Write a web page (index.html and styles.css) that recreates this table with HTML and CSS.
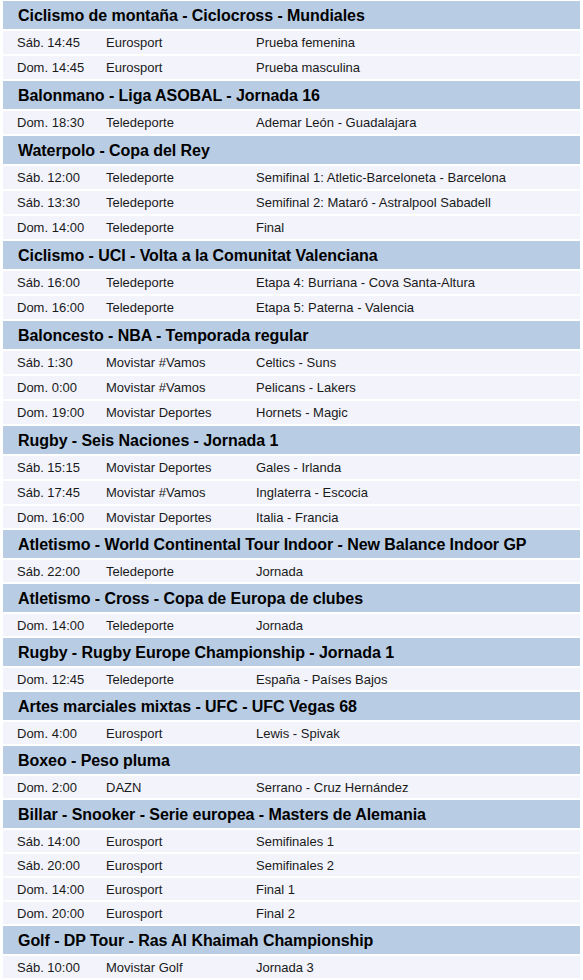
FILE: index.html
```html
<!DOCTYPE html>
<html lang="es">
<head>
<meta charset="utf-8">
<title>Programación</title>
<link rel="stylesheet" href="styles.css">
</head>
<body>
<div class="list">
  <div class="head">Ciclismo de montaña - Ciclocross - Mundiales</div>
  <div class="row tall"><span>Sáb. 14:45</span><span>Eurosport</span><span>Prueba femenina</span></div>
  <div class="row tall"><span>Dom. 14:45</span><span>Eurosport</span><span>Prueba masculina</span></div>
  <div class="head">Balonmano - Liga ASOBAL - Jornada 16</div>
  <div class="row tall"><span>Dom. 18:30</span><span>Teledeporte</span><span>Ademar León - Guadalajara</span></div>
  <div class="head">Waterpolo - Copa del Rey</div>
  <div class="row tall"><span>Sáb. 12:00</span><span>Teledeporte</span><span>Semifinal 1: Atletic-Barceloneta - Barcelona</span></div>
  <div class="row tall"><span>Sáb. 13:30</span><span>Teledeporte</span><span>Semifinal 2: Mataró - Astralpool Sabadell</span></div>
  <div class="row tall"><span>Dom. 14:00</span><span>Teledeporte</span><span>Final</span></div>
  <div class="head">Ciclismo - UCI - Volta a la Comunitat Valenciana</div>
  <div class="row tall"><span>Sáb. 16:00</span><span>Teledeporte</span><span>Etapa 4: Burriana - Cova Santa-Altura</span></div>
  <div class="row tall"><span>Dom. 16:00</span><span>Teledeporte</span><span>Etapa 5: Paterna - Valencia</span></div>
  <div class="head">Baloncesto - NBA - Temporada regular</div>
  <div class="row tall"><span>Sáb. 1:30</span><span>Movistar #Vamos</span><span>Celtics - Suns</span></div>
  <div class="row tall"><span>Dom. 0:00</span><span>Movistar #Vamos</span><span>Pelicans - Lakers</span></div>
  <div class="row tall"><span>Dom. 19:00</span><span>Movistar Deportes</span><span>Hornets - Magic</span></div>
  <div class="head">Rugby - Seis Naciones - Jornada 1</div>
  <div class="row tall"><span>Sáb. 15:15</span><span>Movistar Deportes</span><span>Gales - Irlanda</span></div>
  <div class="row tall"><span>Sáb. 17:45</span><span>Movistar #Vamos</span><span>Inglaterra - Escocia</span></div>
  <div class="row"><span>Dom. 16:00</span><span>Movistar Deportes</span><span>Italia - Francia</span></div>
  <div class="head">Atletismo - World Continental Tour Indoor - New Balance Indoor GP</div>
  <div class="row"><span>Sáb. 22:00</span><span>Teledeporte</span><span>Jornada</span></div>
  <div class="head">Atletismo - Cross - Copa de Europa de clubes</div>
  <div class="row"><span>Dom. 14:00</span><span>Teledeporte</span><span>Jornada</span></div>
  <div class="head">Rugby - Rugby Europe Championship - Jornada 1</div>
  <div class="row"><span>Dom. 12:45</span><span>Teledeporte</span><span>España - Países Bajos</span></div>
  <div class="head">Artes marciales mixtas - UFC - UFC Vegas 68</div>
  <div class="row"><span>Dom. 4:00</span><span>Eurosport</span><span>Lewis - Spivak</span></div>
  <div class="head">Boxeo - Peso pluma</div>
  <div class="row"><span>Dom. 2:00</span><span>DAZN</span><span>Serrano - Cruz Hernández</span></div>
  <div class="head">Billar - Snooker - Serie europea - Masters de Alemania</div>
  <div class="row"><span>Sáb. 14:00</span><span>Eurosport</span><span>Semifinales 1</span></div>
  <div class="row"><span>Sáb. 20:00</span><span>Eurosport</span><span>Semifinales 2</span></div>
  <div class="row"><span>Dom. 14:00</span><span>Eurosport</span><span>Final 1</span></div>
  <div class="row"><span>Dom. 20:00</span><span>Eurosport</span><span>Final 2</span></div>
  <div class="head">Golf - DP Tour - Ras Al Khaimah Championship</div>
  <div class="row"><span>Sáb. 10:00</span><span>Movistar Golf</span><span>Jornada 3</span></div>
</div>
</body>
</html>
```

FILE: styles.css
```css
html, body {
  margin: 0;
  padding: 0;
  background: #ffffff;
}

body {
  font-family: "Liberation Sans", Arial, sans-serif;
}

.list {
  display: flex;
  flex-direction: column;
  gap: 2px;
  padding: 1px 3px 0 3px;
  width: 577px;
}

.head {
  height: 28px;
  box-sizing: border-box;
  display: flex;
  align-items: center;
  padding-left: 15px;
  padding-top: 2px;
  background: #b8cce4;
  color: #000000;
  font-weight: bold;
  font-size: 16px;
  letter-spacing: -0.06px;
}

.row {
  height: 22px;
  box-sizing: border-box;
  display: grid;
  grid-template-columns: 89px 150px 1fr;
  align-items: center;
  padding-left: 14px;
  background: #f2f3fb;
  color: #1a1a1a;
  font-size: 13px;
}

.row.tall {
  height: 23px;
}
```
